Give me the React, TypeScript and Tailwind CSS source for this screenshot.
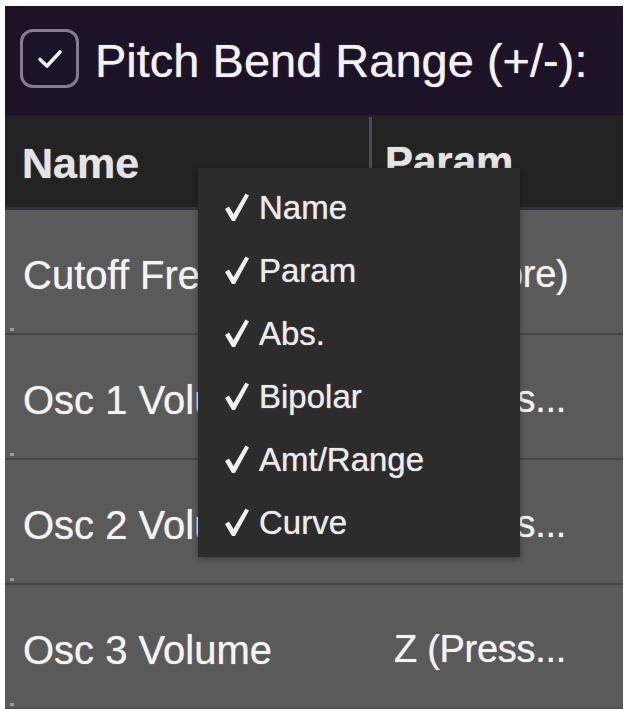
const rows = [
  { name: "Cutoff Frequency", param: "Y (Timbre)" },
  { name: "Osc 1 Volume", param: "Z (Press..." },
  { name: "Osc 2 Volume", param: "Z (Press..." },
  { name: "Osc 3 Volume", param: "Z (Press..." },
];

const columns = ["Name", "Param", "Abs.", "Bipolar", "Amt/Range", "Curve"];

const glow = "[text-shadow:0_0_1px_rgba(255,255,255,0.7)]";

const CheckBox = () => (
  <div className="w-[59px] h-[59px] -mt-[4px] rounded-[13px] border-[3px] border-[#857c90] flex items-center justify-center shrink-0">
    <svg width="26" height="20" viewBox="0 0 26 20" fill="none">
      <path d="M3 10.5 L10 17 L23 3" stroke="#f2f0f4" strokeWidth="3.6" strokeLinecap="round" strokeLinejoin="round" />
    </svg>
  </div>
);

// heavy tick used in the menu
const Tick = () => (
  <svg width="26" height="29" viewBox="0 0 26 29" className="shrink-0">
    <path d="M1 16 L5 13.5 L9.5 21 L21.5 0.5 L25 2.5 L11 28 L8 28 Z" fill="#f0f0f0" />
  </svg>
);

export default function App() {
  return (
    <div className="relative w-[626px] h-[709px] overflow-hidden bg-white pt-[6px] pl-[5px] pr-[3px] font-['Liberation_Sans',Arial,sans-serif]">
      <div className="flex flex-col h-full">
        {/* top bar */}
        <div className="h-[109px] shrink-0 bg-[#1c1426] flex items-center gap-[16px] pl-[15px]">
          <CheckBox />
          <span className={`text-[47px] text-[#f4f2f6] leading-none ${glow}`}>Pitch Bend Range (+/-):</span>
        </div>

        {/* column headers */}
        <div className="h-[95px] shrink-0 bg-[#232323] flex border-b-[3px] border-[#34323c]">
          <div className={`w-[364px] flex items-center pl-[17px] pt-[4px] text-[43px] font-bold text-[#e4e4e4] ${glow}`}>Name</div>
          <div className="w-[3px] mt-[2px] mb-[14px] bg-[#4d4a5a]" />
          <div className={`flex items-center pl-[13px] text-[42px] font-bold text-[#e4e4e4] ${glow}`}>Param</div>
        </div>

        {/* rows */}
        {rows.map((r, i) => (
          <div
            key={i}
            className={`relative h-[125px] shrink-0 bg-[#5a5a5a] flex items-center pt-[6px] border-b-[2px] border-[#464646] text-[#f3f3f3] ${glow}`}
          >
            <div className="w-[367px] pl-[18px] whitespace-nowrap overflow-hidden text-[40px]">{r.name}</div>
            <div className="pl-[22px] whitespace-nowrap text-[38px] tracking-[-0.3px]">{r.param}</div>
            <div className="absolute left-[5px] bottom-[2px] w-[4px] h-[3px] bg-[#9a9a9a]" />
          </div>
        ))}
      </div>

      {/* column visibility menu */}
      <div className="absolute left-[198px] top-[168px] w-[322px] h-[389px] bg-[#2c2c2c] pt-[8px] pl-[26px] shadow-[0_2px_6px_rgba(0,0,0,0.35)]">
        {columns.map((c) => (
          <div key={c} className={`h-[63px] flex items-center gap-[9px] text-[33px] text-[#ececec] ${glow}`}>
            <Tick />
            <span>{c}</span>
          </div>
        ))}
      </div>
    </div>
  );
}
